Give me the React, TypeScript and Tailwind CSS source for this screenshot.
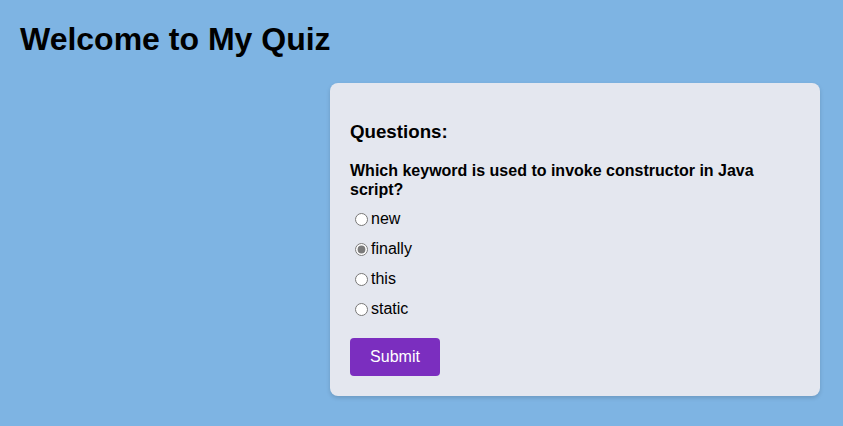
import React from 'react';

const options = ['new', 'finally', 'this', 'static'];

const QuizCard: React.FC = () => {
  return (
    <div className="w-[490px] rounded-lg bg-[#e4e7ef] px-5 pt-5 pb-5 shadow-[0_2px_4px_rgba(0,0,0,0.15)]">
      <h3 className="mt-[18px] mb-[18px] text-[18.72px] leading-[21.5px] font-bold">
        Questions:
      </h3>
      <p className="w-[420px] text-base leading-[19px] font-bold">
        Which keyword is used to invoke constructor in Java script?
      </p>
      <div className="mt-[11px] flex flex-col gap-3">
        {options.map((option) => (
          <label key={option} className="flex h-[18px] items-center text-base leading-[18px]">
            <input
              type="radio"
              name="answer"
              defaultChecked={option === 'finally'}
              className="mt-[1px] mr-[3px] ml-[5px] h-[13px] w-[13px] accent-[#7a7a7a]"
            />
            {option}
          </label>
        ))}
      </div>
      <button className="mt-5 h-[38px] w-[90px] rounded bg-[#7b2ebf] text-base text-white">
        Submit
      </button>
    </div>
  );
};

const App: React.FC = () => {
  return (
    <div className="min-h-[426px] bg-[#7eb4e3] font-['Liberation_Sans',Arial,sans-serif] text-black">
      <div className="px-5 pt-[21px]">
        <h1 className="text-[32px] leading-[37px] font-bold">Welcome to My Quiz</h1>
      </div>
      <div className="mt-[25px] flex justify-end pr-[23px]">
        <QuizCard />
      </div>
    </div>
  );
};

export default App;
